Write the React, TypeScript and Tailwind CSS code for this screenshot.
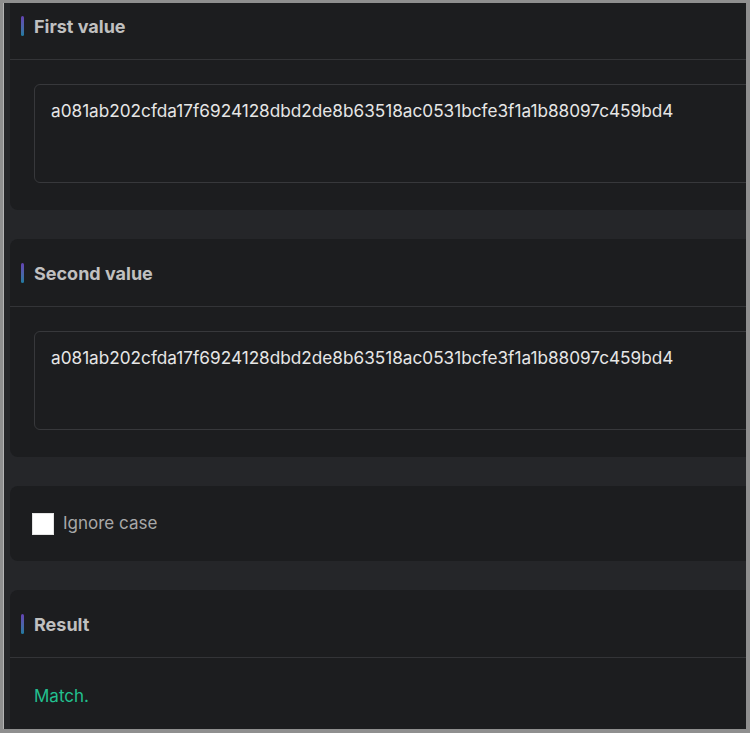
const Accent = () => (
    <span className="block w-[3px] h-[20px] rounded-full bg-gradient-to-b from-[#6442b4] to-[#1a7ba0]"></span>
);

const CardHeader = ({ title }: { title: string }) => (
    <div className="h-[68px] flex items-center gap-[10px] pl-[11px] pt-[1px] border-b border-[#333437]">
        <Accent />
        <span className="text-[18px] font-bold text-[#c0c0c0]">{title}</span>
    </div>
);

const ValueCard = ({ title, value }: { title: string; value: string }) => (
    <div className="bg-[#1c1d1f] rounded-lg">
        <CardHeader title={title} />
        <div className="pt-[24px] pb-[27px] pl-[24px]">
            <div className="h-[99px] rounded-md border border-[#37383b] pl-[16px] pt-[13px] text-[17.2px] text-[#e6e6e6]">
                {value}
            </div>
        </div>
    </div>
);

const HASH = "a081ab202cfda17f6924128dbd2de8b63518ac0531bcfe3f1a1b88097c459bd4";

export default function App() {
    return (
        <div
            className="w-[750px] h-[733px] overflow-hidden bg-[#8f8f8f] pl-[3px] pt-[3px] pr-[4px] pb-[4px]"
            style={{ fontFamily: "Inter, 'Noto Sans', sans-serif" }}
        >
            <div className="w-full h-full overflow-hidden bg-[#252629] border-l border-[#b5b5b5]">
                <div className="w-[800px] -mt-[11px] pl-[6px] flex flex-col gap-[29px]">
                    <ValueCard title="First value" value={HASH} />
                    <ValueCard title="Second value" value={HASH} />
                    <div className="bg-[#1c1d1f] rounded-lg h-[75px] flex items-center pl-[22px] gap-[9px]">
                        <span className="block w-[22px] h-[22px] bg-white border border-[#e4e4e4]"></span>
                        <span className="text-[17px] text-[#a8a8a8]">Ignore case</span>
                    </div>
                    <div className="bg-[#1c1d1f] rounded-lg h-[160px]">
                        <CardHeader title="Result" />
                        <div className="pl-[24px] pt-[26px] text-[17px] text-[#22c08f]">Match.</div>
                    </div>
                </div>
            </div>
        </div>
    );
}
